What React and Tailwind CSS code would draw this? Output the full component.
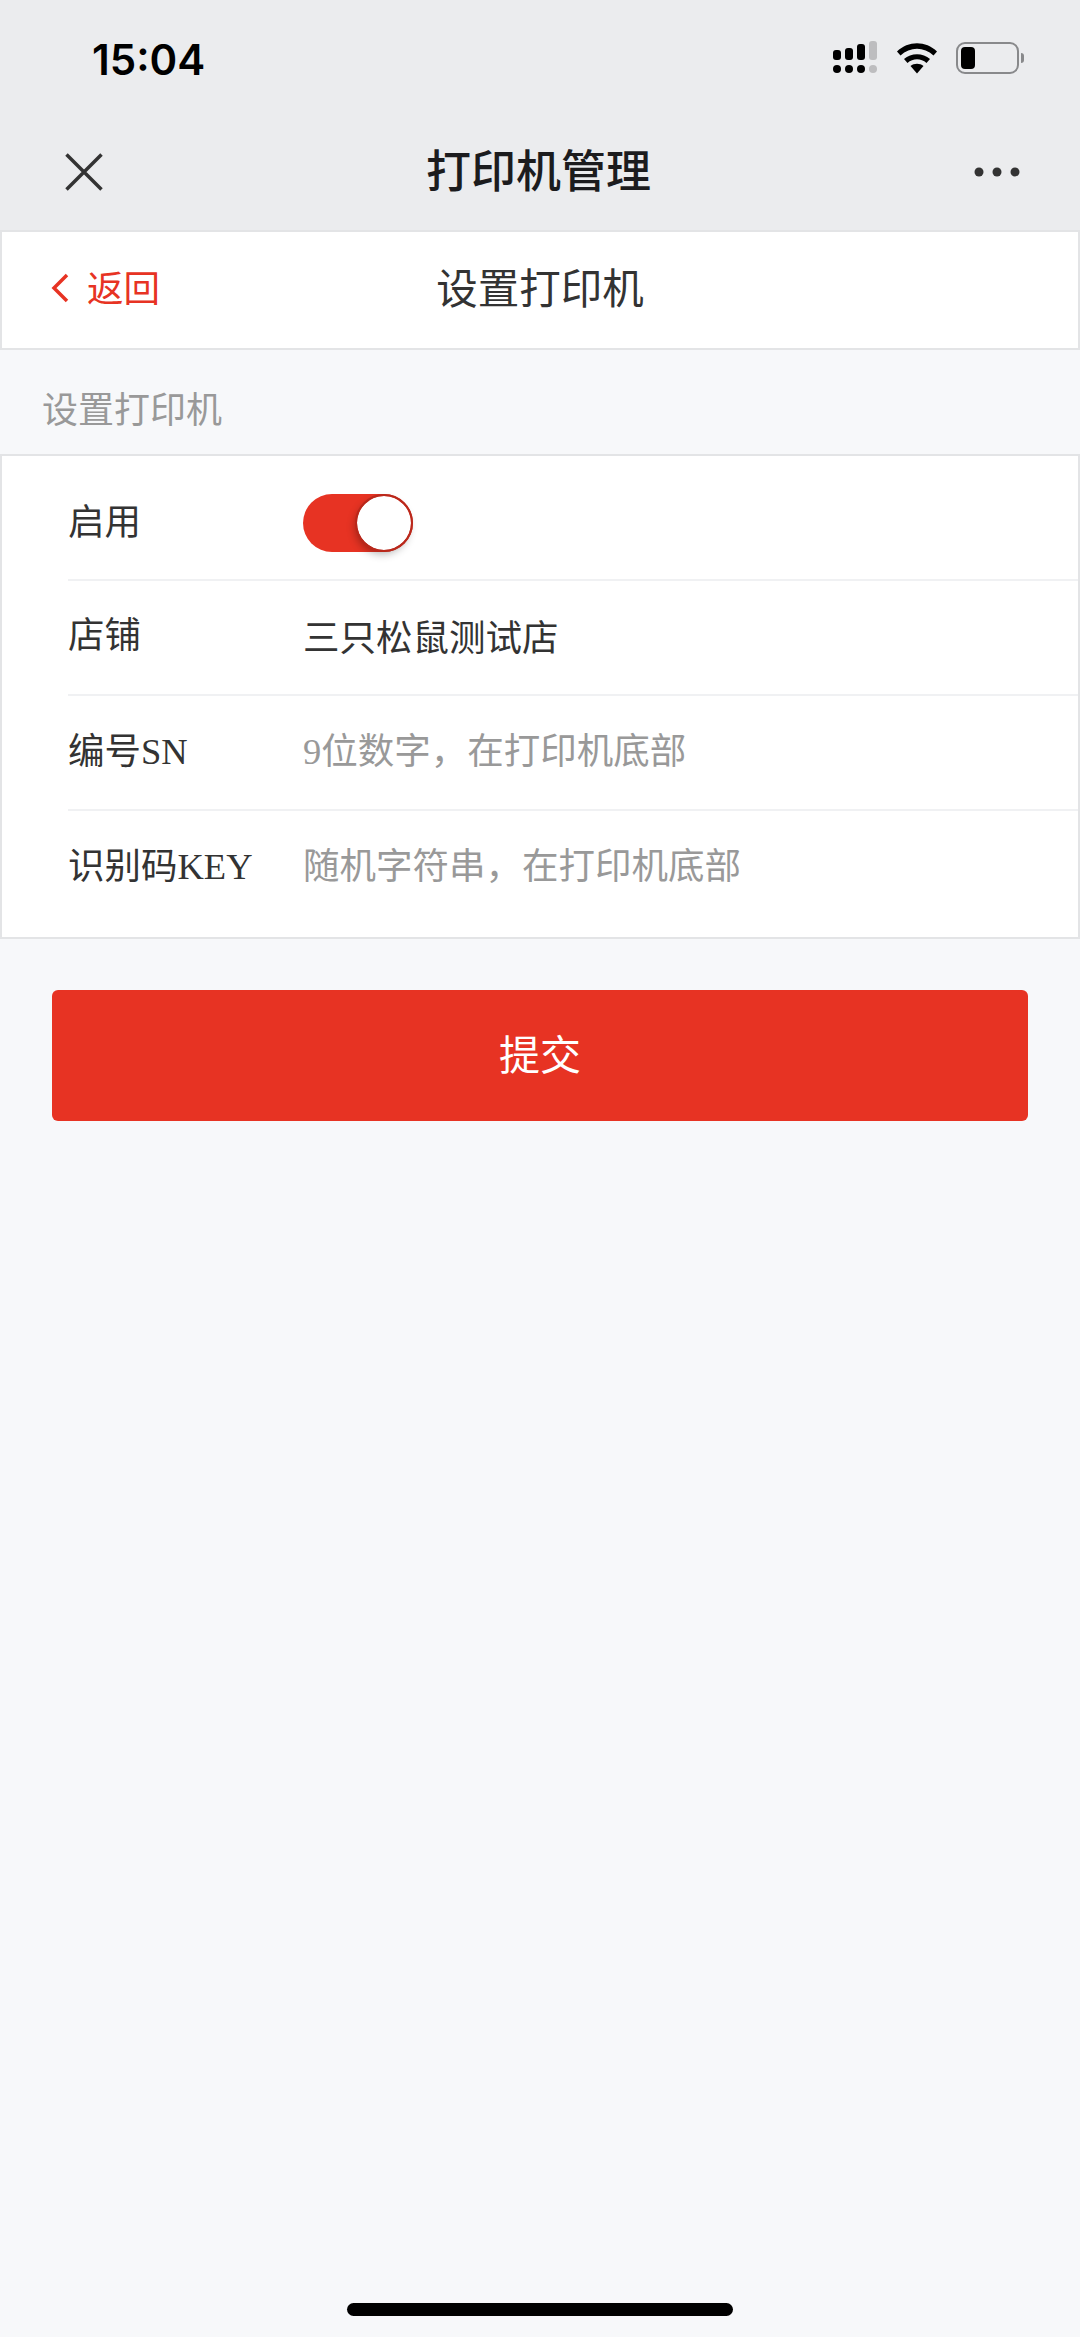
import React from 'react';

const serifCjk = 'font-["Liberation_Serif","Noto_Sans_CJK_SC",serif]';

function SignalIcon() {
  return (
    <svg width="46" height="34" viewBox="0 0 46 34">
      <rect x="1" y="9" width="8" height="10" rx="3" fill="#000" />
      <rect x="13" y="7" width="8" height="12" rx="3" fill="#000" />
      <rect x="25" y="3" width="8" height="16" rx="3" fill="#000" />
      <rect x="37" y="0" width="8" height="19" rx="3" fill="#bdbdbf" />
      <circle cx="5" cy="28" r="4" fill="#000" />
      <circle cx="17" cy="28" r="4" fill="#000" />
      <circle cx="29" cy="28" r="4" fill="#000" />
      <circle cx="41" cy="28" r="4" fill="#bdbdbf" />
    </svg>
  );
}

function WifiIcon() {
  return (
    <svg width="42" height="32" viewBox="0 0 42 32">
      <path d="M1 9.5 C12 -1.5 30 -1.5 41 9.5 L37.5 13.5 C28 4.5 14 4.5 4.500 13.500 Z" fill="#000" />
      <path d="M8 17 C15 10.500 27 10.500 34 17 L30.500 21 C25 16 17 16 11.500 21 Z" fill="#000" />
      <path d="M14.500 24 C18 21 24 21 27.500 24 L21 31.500 Z" fill="#000" />
    </svg>
  );
}

function BatteryIcon() {
  return (
    <div className="flex items-center gap-[2px]">
      <div className="w-[63px] h-[32px] rounded-[9px] border-[2px] border-[#88898b] p-[3px]">
        <div className="w-[14px] h-full rounded-[4px] bg-black" />
      </div>
      <div className="w-[3px] h-[10px] rounded-r-full bg-[#88898b]" />
    </div>
  );
}

function Row({ label, children, className }) {
  return (
    <div className={`flex items-center ${className}`}>
      <div className={`w-[235px] shrink-0 text-[36.500px] text-[#333] ${serifCjk}`}>{label}</div>
      {children}
    </div>
  );
}

export default function App() {
  return (
    <div className='min-h-[2337px] flex flex-col bg-[#f7f8fa] font-["Noto_Sans_CJK_SC",sans-serif]'>
      <div className="h-[230px] bg-[#ebecee] shrink-0">
        <div className="h-[118px] flex items-start justify-between pt-[35px] pl-[92px] pr-[56px]">
          <span className='text-[42px] leading-[50px] font-semibold text-black font-["Inter",sans-serif]'>15:04</span>
          <div className="flex items-center gap-[18px] pt-[6px]">
            <SignalIcon />
            <WifiIcon />
            <BatteryIcon />
          </div>
        </div>
        <div className="h-[108px] flex items-center justify-between pl-[65px] pr-[60px]">
          <svg width="38" height="38" viewBox="0 0 38 38">
            <path d="M1.500 1.500 L36.500 36.500 M36.500 1.500 L1.500 36.500" stroke="#333" strokeWidth="3.500" fill="none" />
          </svg>
          <span className="text-[45px] leading-[56px] font-medium text-[#1c1c1e] mb-[6px]">打印机管理</span>
          <svg width="46" height="10" viewBox="0 0 46 10">
            <circle cx="5" cy="5" r="4.500" fill="#333" />
            <circle cx="23" cy="5" r="4.500" fill="#333" />
            <circle cx="41" cy="5" r="4.500" fill="#333" />
          </svg>
        </div>
      </div>

      <div className="relative h-[120px] shrink-0 flex items-center justify-center bg-white border-2 border-[#e3e4e6]">
        <div className="absolute left-[48px] top-0 h-full flex items-center gap-[17px]">
          <svg width="20" height="30" viewBox="0 0 20 30" className="mb-[4px]">
            <path d="M17 2 L4 15 L17 28" stroke="#e73323" strokeWidth="3.500" fill="none" />
          </svg>
          <span className="text-[36.500px] leading-[48px] text-[#e73323] mb-[7px]">返回</span>
        </div>
        <span className="text-[41.500px] leading-[52px] text-[#333] mb-[9px]">设置打印机</span>
      </div>

      <div className="h-[104px] shrink-0 flex items-center pt-[10px] pl-[42px] text-[36px] text-[#999]">设置打印机</div>

      <div className="bg-white border-2 border-[#e3e4e6] pl-[66px] pb-[11px]">
        <Row label="启用" className="h-[125px] pt-[11px] border-b-2 border-[#f0f1f3]">
          <div className="w-[110px] h-[58px] flex items-center justify-end pr-[2px] rounded-full bg-[#e73323]">
            <div className="w-[54px] h-[54px] rounded-full bg-white outline-2 outline-[#b9281b] shadow-[-2px_4px_9px_rgba(0,0,0,0.3)]" />
          </div>
        </Row>
        <Row label="店铺" className="h-[115px] pb-[3px] border-b-2 border-[#f0f1f3]">
          <span className="text-[36.500px] text-[#333]">三只松鼠测试店</span>
        </Row>
        <Row label="编号SN" className="h-[115px] pb-[1px] border-b-2 border-[#f0f1f3]">
          <span className={`text-[36.500px] text-[#999] ${serifCjk}`}>9位数字，在打印机底部</span>
        </Row>
        <Row label="识别码KEY" className="h-[115px] pb-[2px]">
          <span className={`text-[36.500px] text-[#999] ${serifCjk}`}>随机字符串，在打印机底部</span>
        </Row>
      </div>

      <div className="px-[52px] pt-[51px]">
        <button className="w-full h-[131px] rounded-[6px] bg-[#e73323] text-white text-[41px] pb-[6px]">提交</button>
      </div>

      <div className="mt-auto pb-[21px] flex justify-center">
        <div className="w-[386px] h-[13px] rounded-full bg-black" />
      </div>
    </div>
  );
}
